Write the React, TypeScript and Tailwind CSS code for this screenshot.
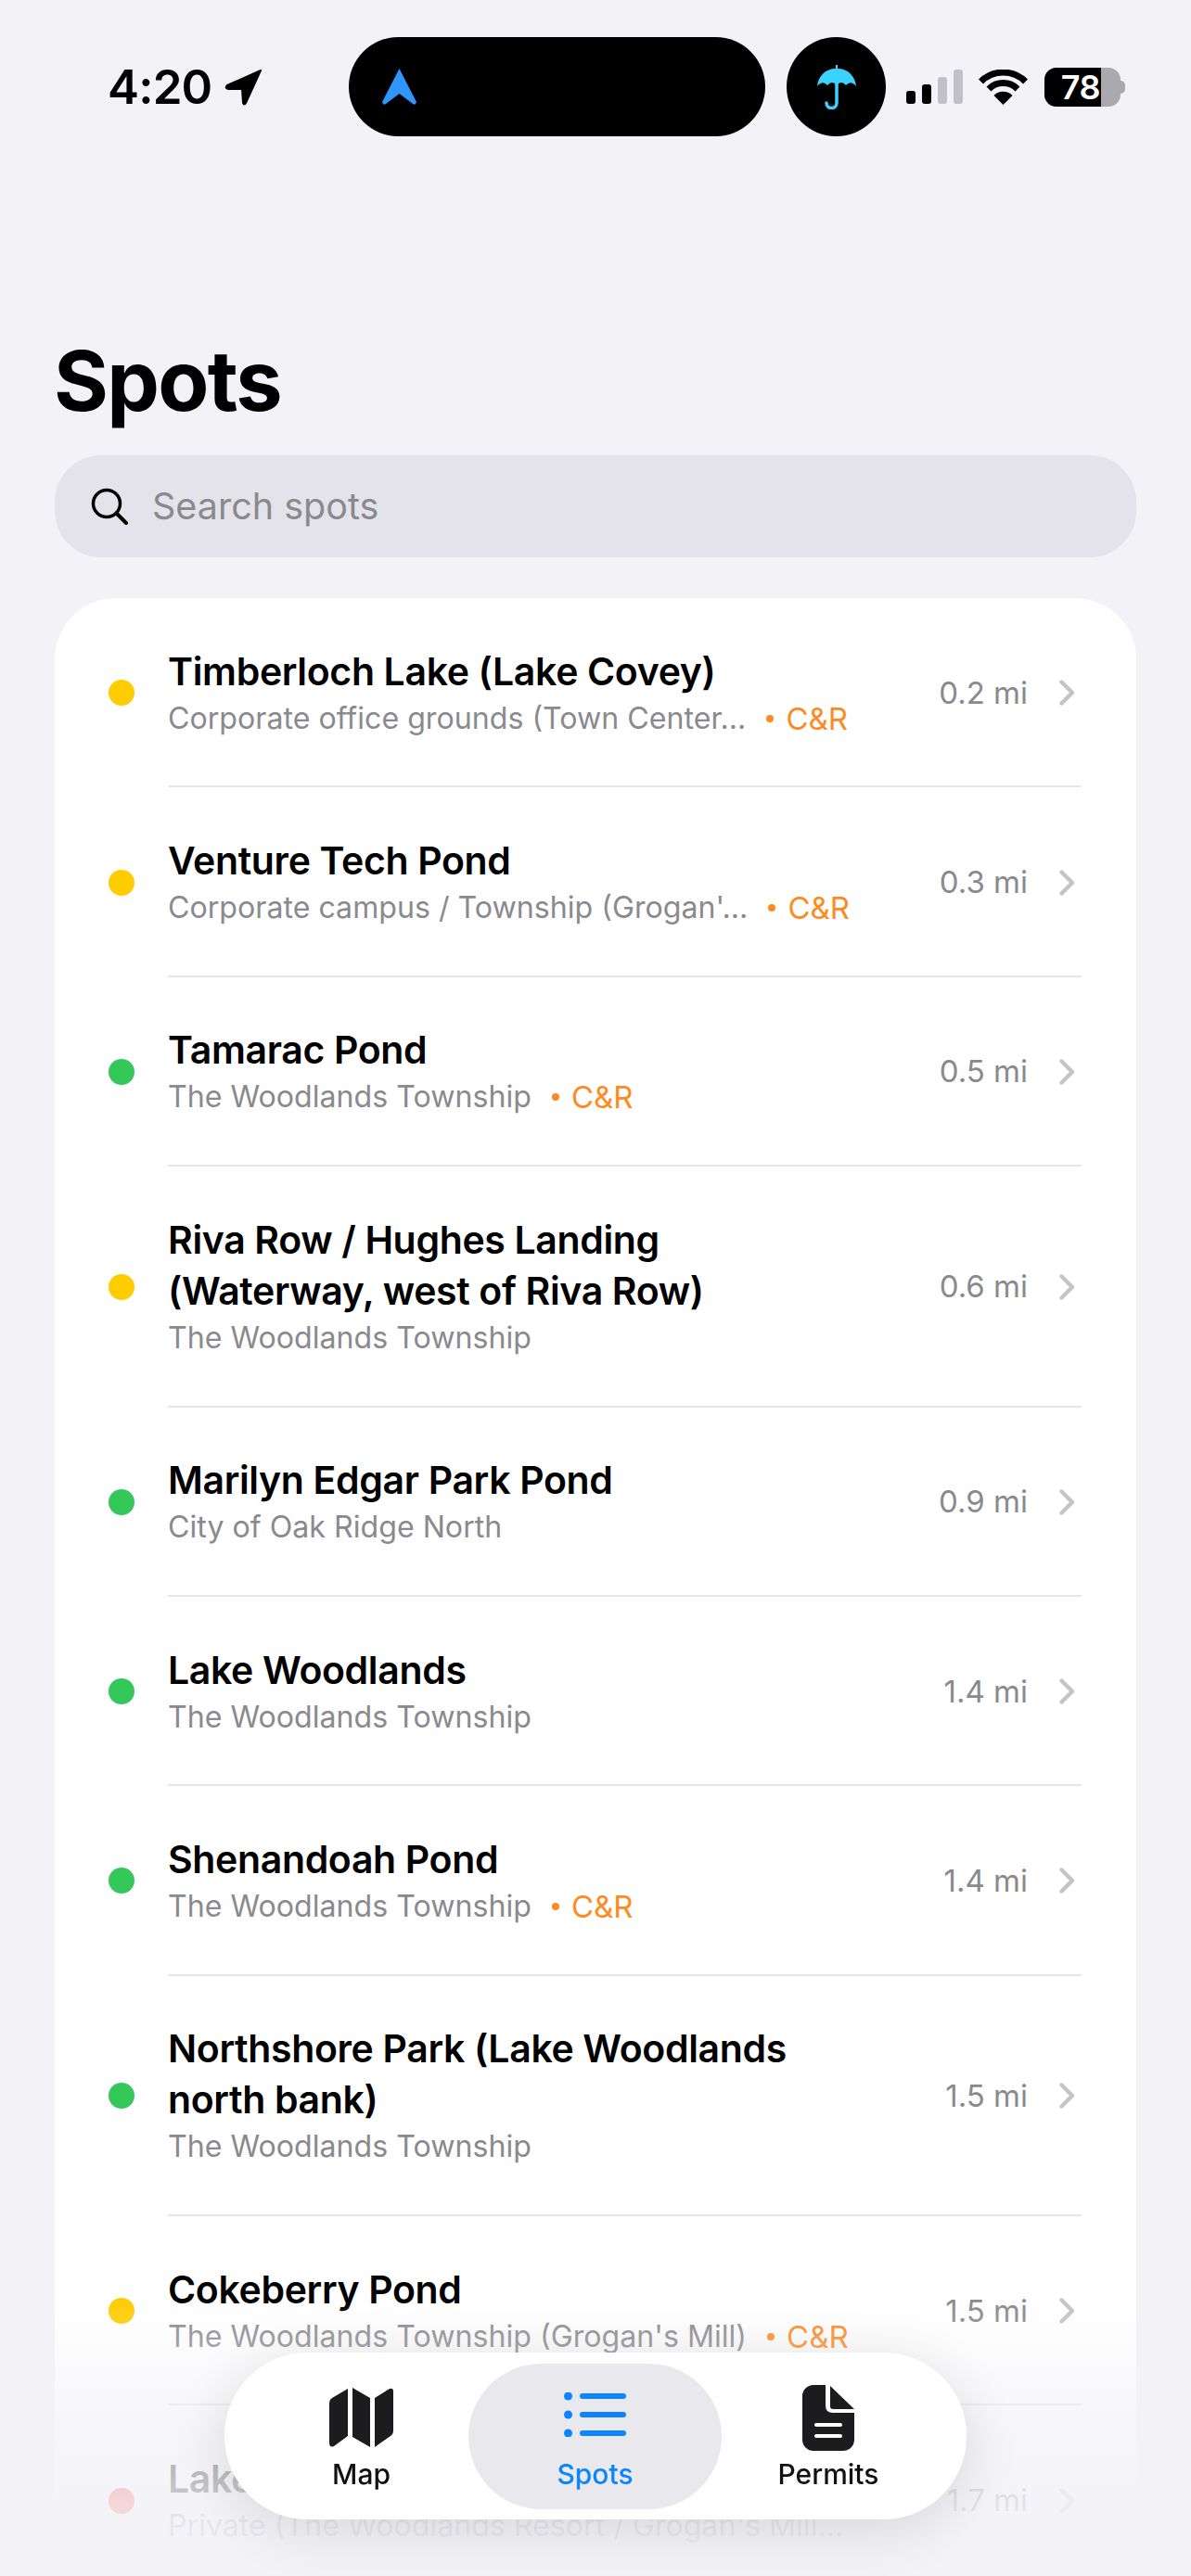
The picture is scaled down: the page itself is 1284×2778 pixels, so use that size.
import React from 'react';

type Spot = {
  name: string[];
  sub: string;
  dist: string;
  dot: string;
  cr?: boolean;
};

const spots: Spot[] = [
  { name: ['Timberloch Lake (Lake Covey)'], sub: 'Corporate office grounds (Town Center...', dist: '0.2 mi', dot: 'bg-[#ffcc00]', cr: true },
  { name: ['Venture Tech Pond'], sub: "Corporate campus / Township (Grogan'...", dist: '0.3 mi', dot: 'bg-[#ffcc00]', cr: true },
  { name: ['Tamarac Pond'], sub: 'The Woodlands Township', dist: '0.5 mi', dot: 'bg-[#34c759]', cr: true },
  { name: ['Riva Row / Hughes Landing', '(Waterway, west of Riva Row)'], sub: 'The Woodlands Township', dist: '0.6 mi', dot: 'bg-[#ffcc00]' },
  { name: ['Marilyn Edgar Park Pond'], sub: 'City of Oak Ridge North', dist: '0.9 mi', dot: 'bg-[#34c759]' },
  { name: ['Lake Woodlands'], sub: 'The Woodlands Township', dist: '1.4 mi', dot: 'bg-[#34c759]' },
  { name: ['Shenandoah Pond'], sub: 'The Woodlands Township', dist: '1.4 mi', dot: 'bg-[#34c759]', cr: true },
  { name: ['Northshore Park (Lake Woodlands', 'north bank)'], sub: 'The Woodlands Township', dist: '1.5 mi', dot: 'bg-[#34c759]' },
  { name: ['Cokeberry Pond'], sub: "The Woodlands Township (Grogan's Mill)", dist: '1.5 mi', dot: 'bg-[#ffcc00]', cr: true },
  { name: ['Lake'], sub: "Private (The Woodlands Resort / Grogan's Mill...", dist: '1.7 mi', dot: 'bg-[#ff3b30]' },
];

const StatusBar = () => (
  <div className="flex items-center h-[107px] mt-[40px] pl-[116px] text-black">
    <span className="text-[51px] leading-none font-semibold tracking-[-0.8px] w-[123px]">4:20</span>
    <svg width="41" height="40" viewBox="0 0 41 40" className="ml-[3px]">
      <path d="M39 2 L3 18 Q0 21 4 22 L19 22 L20 37 Q21 40 23 37 Z" fill="#000" stroke="#000" strokeWidth="2" strokeLinejoin="round" />
    </svg>
    <div className="ml-[93px] w-[449px] h-[107px] rounded-full bg-black flex items-center pl-[36px]">
      <svg width="37" height="40" viewBox="0 0 37 40">
        <path d="M18.5 0 L37 36 Q36 40 33 38 L18.5 27 L4 38 Q1 40 0 36 Z" fill="#2f96ff" />
      </svg>
    </div>
    <div className="ml-[23px] w-[107px] h-[107px] rounded-full bg-black flex items-center justify-center">
      <svg width="42" height="48" viewBox="0 0 42 48">
        <path d="M20 0 h2 v4 C33 4 41 12 42 23 Q36 16 31 22 Q26 16 21 22 Q16 16 11 22 Q6 16 0 23 C1 12 9 4 20 4 Z" fill="#3cd2ff" />
        <path d="M21 20 V41 a5.5 5.5 0 0 1 -11 0" fill="none" stroke="#3cd2ff" strokeWidth="3.5" strokeLinecap="round" />
      </svg>
    </div>
    <div className="ml-[22px] flex items-end gap-[7px] h-[37px]">
      <div className="w-[10px] h-[14px] rounded-[3px] bg-black" />
      <div className="w-[10px] h-[21px] rounded-[3px] bg-black" />
      <div className="w-[10px] h-[29px] rounded-[3px] bg-[#c0c0c6]" />
      <div className="w-[10px] h-[37px] rounded-[3px] bg-[#c0c0c6]" />
    </div>
    <svg width="53" height="38" viewBox="0 0 53 38" className="ml-[17px]">
      <path d="M26.5 38 L16.5 28 A14 14 0 0 1 36.5 28 Z" fill="#000" />
      <path d="M11 21 A22 22 0 0 1 42 21" fill="none" stroke="#000" strokeWidth="7" />
      <path d="M2.5 13 A34 34 0 0 1 50.5 13" fill="none" stroke="#000" strokeWidth="7" />
    </svg>
    <div className="ml-[18px] flex items-center">
      <div className="w-[82px] h-[42px] rounded-[13px] overflow-hidden bg-[#a9a9ae] flex">
        <div className="w-[61px] h-full bg-black text-white text-[36px] leading-[42px] font-semibold text-right pr-[1px] tracking-[-0.5px]">78</div>
      </div>
      <div className="w-[5px] h-[14px] rounded-r-full bg-[#a9a9ae]" />
    </div>
  </div>
);

const SpotRow = ({ spot, last }: { spot: Spot; last: boolean }) => (
  <div>
    <div className="flex items-center pl-[58px] pr-[66px] pt-[51.7px] pb-[49.7px]">
      <div className={`w-[28px] h-[28px] rounded-full shrink-0 ${spot.dot}`} />
      <div className="ml-[36px] flex-1 min-w-0">
        {spot.name.map((line) => (
          <div key={line} className="text-[41px] leading-[55px] font-[560] text-black tracking-[-0.35px] whitespace-nowrap">
            {line}
          </div>
        ))}
        <div className="flex items-center text-[32.15px] leading-[46px] text-[#8a8a8e] whitespace-nowrap">
          <span>{spot.sub}</span>
          {spot.cr && (
            <span className="flex items-center text-[#ff8a1f] text-[33px]">
              <span className="ml-[22px] w-[8px] h-[8px] rounded-full bg-[#ff8a1f]" />
              <span className="ml-[13px]">C&amp;R</span>
            </span>
          )}
        </div>
      </div>
      <span className="text-[33px] leading-[46px] text-[#8a8a8e] shrink-0 -mt-[1px]">{spot.dist}</span>
      <svg width="17" height="28" viewBox="0 0 17 28" className="ml-[34px] shrink-0">
        <path d="M2.5 2.5 L14 14 L2.5 25.5" fill="none" stroke="#c4c4c7" strokeWidth="4.4" strokeLinecap="round" strokeLinejoin="round" />
      </svg>
    </div>
    {!last && <div className="ml-[122px] mr-[59px] h-[2px] bg-[#e5e5ea]" />}
  </div>
);

const TabBar = () => (
  <div className="absolute left-[242px] top-[2537px] w-[800px] h-[180px] rounded-full bg-white/95 backdrop-blur-md shadow-[0_10px_60px_rgba(0,0,0,0.12)] flex items-center pl-[32px] text-[30px] leading-[36px] font-[480]">
    <div className="w-[231px] h-[157px] flex flex-col items-center text-[#111]">
      <svg width="69" height="64" viewBox="0 0 69 64" className="mt-[26px]">
        <g fill="#1c1c1e">
          <path d="M20 1 V52 L5 63 Q0 65 0 59 V17 Q0 13 3 11 Z" />
          <path d="M25 0 L44 11 V64 L25 53 Z" />
          <path d="M49 11 L65 1 Q69 0 69 4 V46 Q69 50 66 52 L49 64 Z" />
        </g>
      </svg>
      <span className="mt-[11px]">Map</span>
    </div>
    <div className="w-[273px] h-[157px] rounded-full bg-[#e9e9ed] flex flex-col items-center text-[#0a84ff]">
      <svg width="67" height="48" viewBox="0 0 67 48" className="mt-[31px]">
        <g fill="#0a84ff">
          <circle cx="4.5" cy="4" r="4.5" />
          <circle cx="4.5" cy="24" r="4.5" />
          <circle cx="4.5" cy="44" r="4.5" />
          <rect x="17" y="1" width="50" height="6" rx="3" />
          <rect x="17" y="21" width="50" height="6" rx="3" />
          <rect x="17" y="41" width="50" height="6" rx="3" />
        </g>
      </svg>
      <span className="mt-[22px]">Spots</span>
    </div>
    <div className="w-[230px] h-[157px] flex flex-col items-center text-[#111]">
      <svg width="56" height="71" viewBox="0 0 56 71" className="mt-[23px]">
        <path d="M12 0 H25 V22 Q25 30 33 30 H56 V59 A12 12 0 0 1 44 71 H12 A12 12 0 0 1 0 59 V12 A12 12 0 0 1 12 0 Z" fill="#1c1c1e" />
        <path d="M30 1 L56 26 H33 Q30 26 30 23 Z" fill="#1c1c1e" />
        <rect x="13" y="41" width="30" height="4" rx="2" fill="#fff" />
        <rect x="13" y="53" width="30" height="4" rx="2" fill="#fff" />
      </svg>
      <span className="mt-[7px]">Permits</span>
    </div>
  </div>
);

export default function App() {
  return (
    <div className="relative w-[1284px] h-[2778px] overflow-hidden bg-[#f2f2f7] font-['Inter',sans-serif]">
      <StatusBar />

      <h1 className="ml-[58px] mt-[211px] text-[90px] leading-[106px] font-bold text-black tracking-[-1.7px]">Spots</h1>

      <div className="mx-[59px] mt-[27px] h-[110px] rounded-[50px] bg-[#e3e3e9] flex items-center pl-[39px]">
        <svg width="40" height="40" viewBox="0 0 40 40">
          <circle cx="17" cy="17" r="14.5" fill="none" stroke="#000" strokeWidth="3.5" />
          <path d="M27.5 27.5 L38 38" stroke="#000" strokeWidth="4" strokeLinecap="round" />
        </svg>
        <span className="ml-[26px] mt-[2px] text-[39.5px] text-[#8a8a8e]">Search spots</span>
      </div>

      <div className="mx-[59px] mt-[44px] rounded-[66px] bg-white pb-[100px]">
        {spots.map((spot, i) => (
          <SpotRow key={spot.name[0]} spot={spot} last={i === spots.length - 1} />
        ))}
      </div>

      {/* bottom fade under the tab bar */}
      <div className="absolute left-0 right-0 bottom-0 h-[300px] bg-gradient-to-b from-[#f2f2f7]/0 via-[#f2f2f7]/70 to-[#f2f2f7]" />

      <TabBar />
    </div>
  );
}
